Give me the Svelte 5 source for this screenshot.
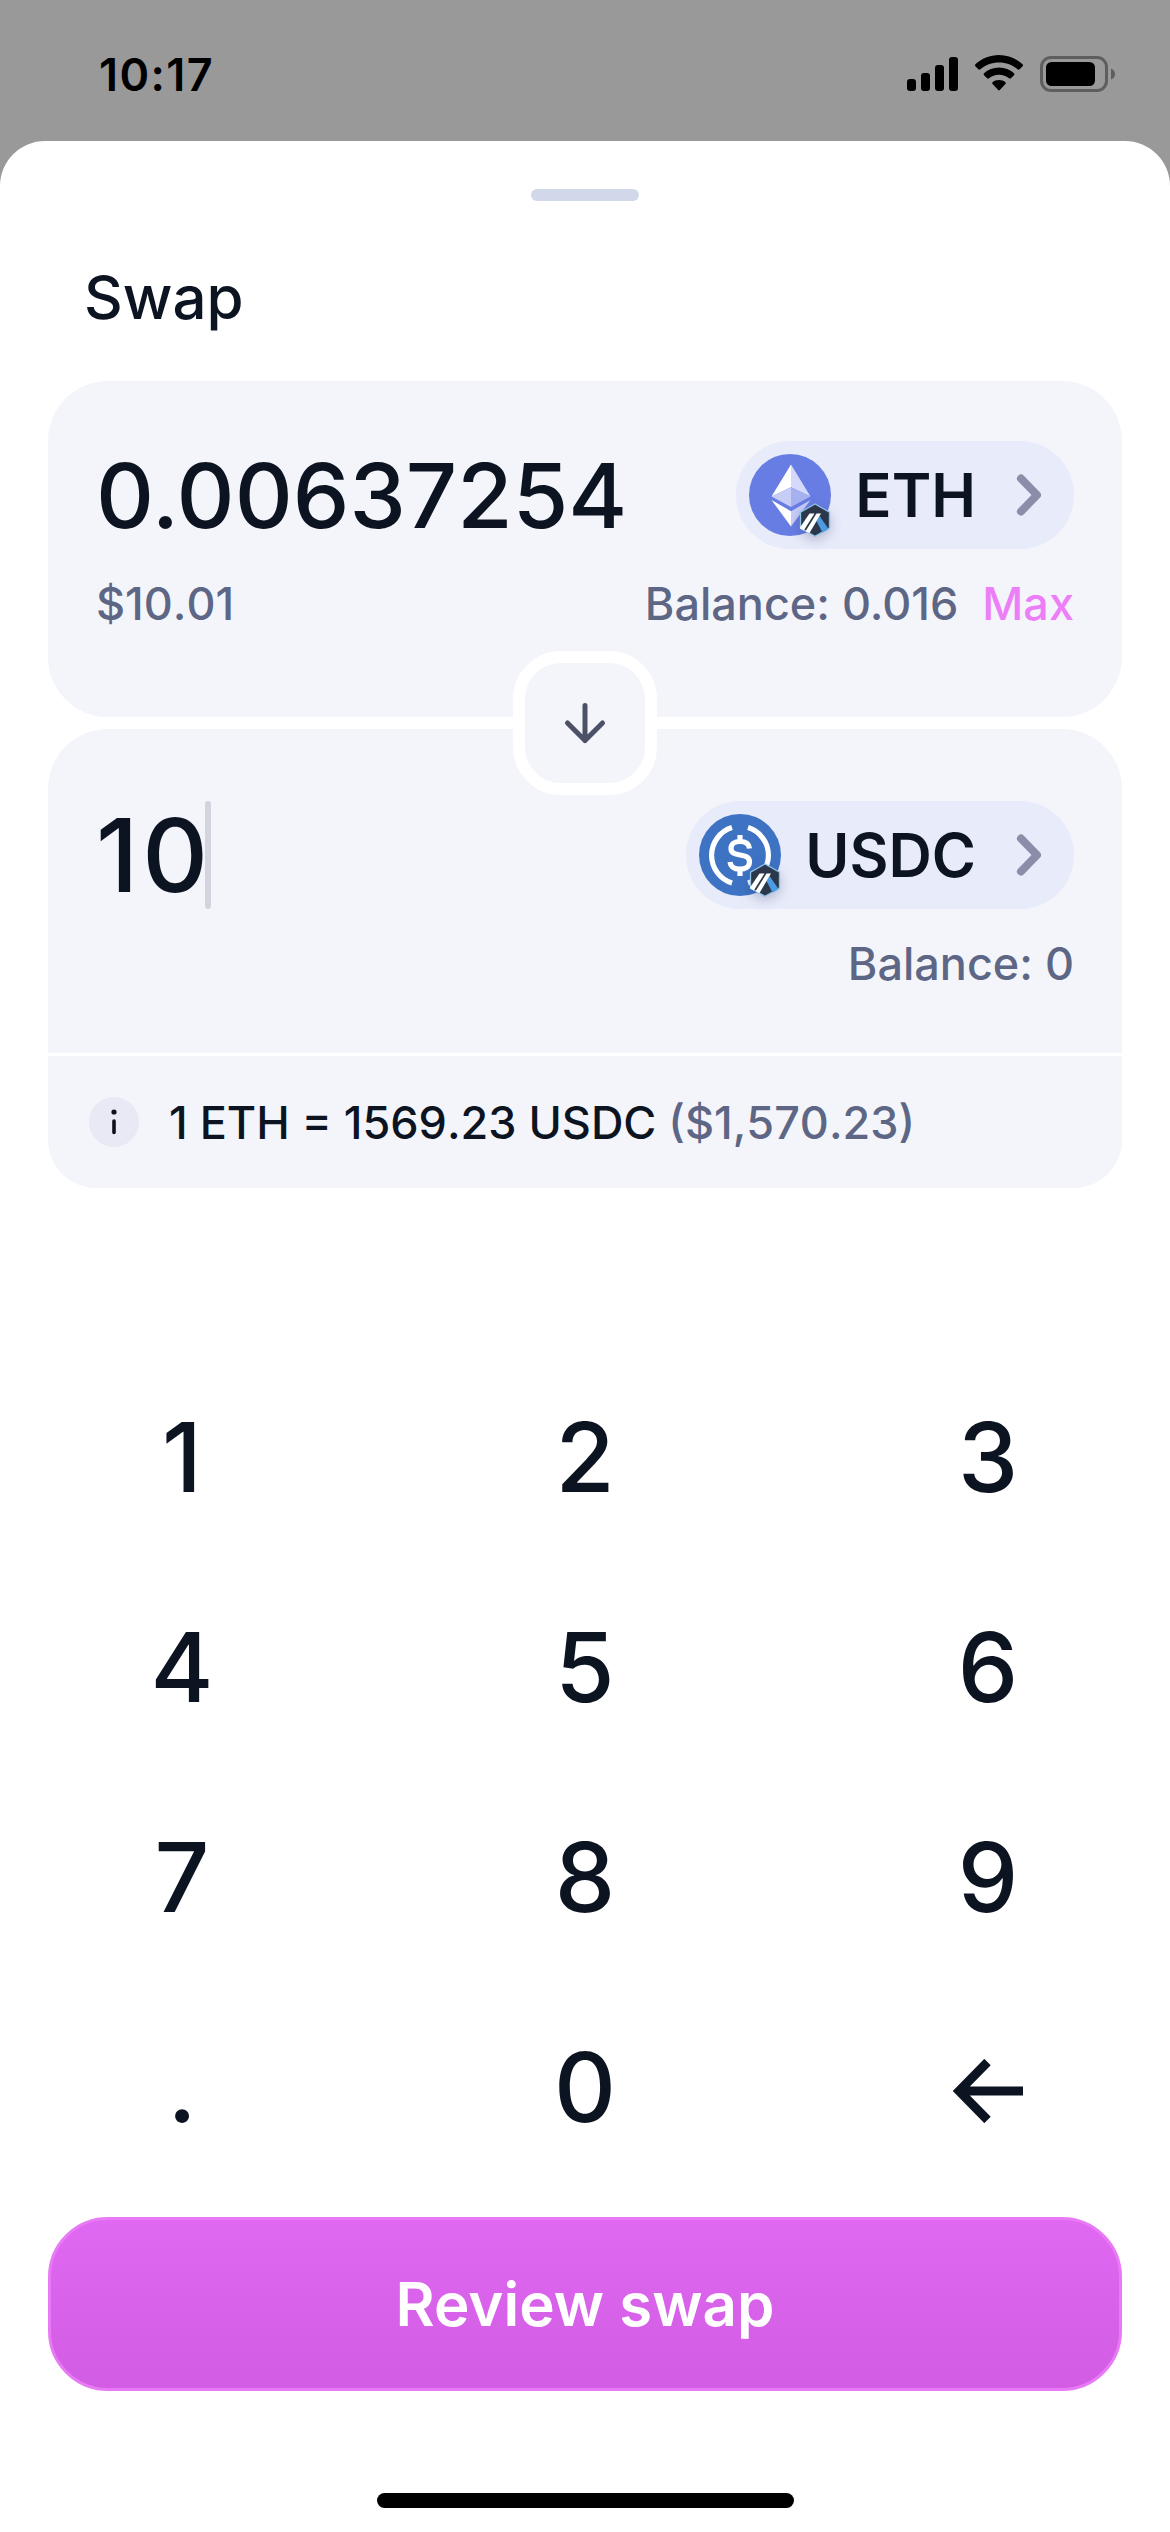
<script>
    let sellAmount = '0.00637254';
    let buyAmount = '10';

    const keys = ['1', '2', '3', '4', '5', '6', '7', '8', '9', '.', '0', 'back'];

    function press(key) {
        if (key === 'back') {
            buyAmount = buyAmount.slice(0, -1);
            return;
        }
        if (key === '.' && buyAmount.includes('.')) return;
        buyAmount += key;
    }
</script>

<div class="screen">
    <div class="status">
        <span class="time">10:17</span>
        <div class="status-icons">
            <svg class="signal" width="51" height="34" viewBox="0 0 51 34">
                <rect x="0" y="22" width="9" height="12" rx="3" />
                <rect x="14" y="16" width="9" height="18" rx="3" />
                <rect x="28" y="8" width="9" height="26" rx="3" />
                <rect x="42" y="0" width="9" height="34" rx="3" />
            </svg>
            <svg class="wifi" width="48" height="36" viewBox="0 0 48 36">
                <path d="M24 0C33 0 41.400 3.500 47.600 9.300Q48.400 10.300 47.600 11.200L44.600 14.300Q43.600 15.200 42.600 14.300C37.700 9.900 31.200 7.500 24 7.500S10.300 9.900 5.400 14.300Q4.400 15.200 3.400 14.300L.4 11.200Q-.4 10.300 .4 9.300C6.600 3.500 15 0 24 0Z" />
                <path d="M24 12.500C29.800 12.500 35 14.600 39 18.300Q39.900 19.200 39 20.200L35.900 23.200Q35 24.100 34 23.200C31.300 20.900 27.800 19.700 24 19.700S16.700 20.900 14 23.200Q13 24.100 12.100 23.200L9 20.200Q8.100 19.200 9 18.300C13 14.600 18.200 12.500 24 12.500Z" />
                <path d="M24 25C26.600 25 28.800 25.900 30.500 27.300Q31.300 28.200 30.400 29.100L24.800 35Q24 35.800 23.200 35L17.600 29.100Q16.700 28.200 17.500 27.300C19.200 25.900 21.400 25 24 25Z" />
            </svg>
            <svg class="battery" width="76" height="36" viewBox="0 0 76 36">
                <rect x="1.500" y="1.500" width="65" height="33" rx="9.500" fill="none" stroke="#5e5e5e" stroke-width="3" />
                <rect x="6" y="6" width="49" height="24" rx="5.500" />
                <path d="M71 12.500Q75 14 75 18T71 23.500Z" fill="#5e5e5e" />
            </svg>
        </div>
    </div>

    <div class="sheet">
        <div class="handle"></div>
        <h1>Swap</h1>

        <div class="card sell">
            <div class="row">
                <span class="amount">{sellAmount}</span>
                <button class="token">
                    <span class="logo">
                        <svg width="82" height="82" viewBox="0 0 82 82">
                            <circle cx="41" cy="41" r="41" fill="#687de3" />
                            <path d="M42 10.500L22.500 42.500L42 33.300Z" fill="#fff" />
                            <path d="M42 10.500L61.500 42.500L42 33.300Z" fill="#d5dafa" />
                            <path d="M22.500 42.500L42 33.300V53Z" fill="#c6cdf7" />
                            <path d="M61.500 42.500L42 33.300V53Z" fill="#a6b1ef" />
                            <path d="M22.500 46L42 57.200V72.500Z" fill="#fff" />
                            <path d="M61.500 46L42 57.200V72.500Z" fill="#c6cdf7" />
                        </svg>
                        <span class="badge">{@render arbitrum()}</span>
                    </span>
                    <span class="symbol">ETH</span>
                    {@render chevron()}
                </button>
            </div>
            <div class="row details">
                <span class="fiat">$10.01</span>
                <span>Balance: 0.016 <b>Max</b></span>
            </div>

            <button class="switch" aria-label="Switch tokens">
                <svg width="44" height="44" viewBox="0 0 44 44" fill="none" stroke="#4c5168" stroke-width="5" stroke-linecap="round" stroke-linejoin="round">
                    <path d="M22 4.500V39.500M4.500 22L22 39.500L39.500 22" />
                </svg>
            </button>
        </div>

        <div class="card buy">
            <div class="row">
                <span class="amount large">{buyAmount}<i class="caret"></i></span>
                <button class="token">
                    <span class="logo">
                        <svg width="82" height="82" viewBox="0 0 82 82">
                            <circle cx="41" cy="41" r="41" fill="#3e73c4" />
                            <g fill="none" stroke="#fff" stroke-width="5.200">
                                <path d="M33 13.600A29 29 0 0 0 33 69" />
                                <path d="M49 13.600A29 29 0 0 1 49 69" />
                                <path d="M50.500 34.500C50 29.500 46.500 27.500 41 27.500C35.500 27.500 32 30.100 32 34.500C32 44.500 50.500 37.500 50.500 48C50.500 52.500 46.500 55.200 41 55.200C34.500 55.200 31.500 52.200 31 48" />
                                <path d="M41 21V28M41 55V62" />
                            </g>
                        </svg>
                        <span class="badge">{@render arbitrum()}</span>
                    </span>
                    <span class="symbol">USDC</span>
                    {@render chevron()}
                </button>
            </div>
            <div class="row details end">
                <span>Balance: 0</span>
            </div>
        </div>

        <div class="rate">
            <svg width="50" height="50" viewBox="0 0 50 50">
                <circle cx="25" cy="25" r="25" fill="#e8e9f4" />
                <circle cx="25" cy="15" r="2.600" fill="#0d111c" />
                <path d="M25 24V35.500" stroke="#0d111c" stroke-width="3.600" stroke-linecap="round" />
            </svg>
            <span>1 ETH = 1569.23 USDC <em>($1,570.23)</em></span>
        </div>

        <div class="keypad">
            {#each keys as key}
                <button on:click={() => press(key)} aria-label={key}>
                    {#if key === 'back'}
                        <svg class="back" width="70" height="64" viewBox="0 0 70 64" fill="none" stroke="#0d1421" stroke-width="9">
                            <path d="M34.500 3L6 32L34.500 61M6 32H70" />
                        </svg>
                    {:else}
                        {key}
                    {/if}
                </button>
            {/each}
        </div>

        <button class="review">Review swap</button>
        <div class="home"></div>
    </div>
</div>

{#snippet chevron()}
    <svg class="chevron" width="26" height="42" viewBox="0 0 26 42" fill="none" stroke="#8a8ea9" stroke-width="8" stroke-linecap="round" stroke-linejoin="round">
        <path d="M5 4.500L21 21L5 37.500" />
    </svg>
{/snippet}

{#snippet arbitrum()}
    <svg width="32" height="34" viewBox="0 0 32 34">
        <path d="M16 1L30.500 9.200V25L16 33.200L1.500 25V9.200Z" fill="#2b384c" stroke="#8fc0e6" stroke-width="1.300" />
        <path d="M17.500 18L20.500 13L29.500 26L23.500 29.500Z" fill="#4b9ae2" />
        <path d="M10.500 10.500H15.500L4.800 27.500L1 25.500V24.500Z" fill="#fff" />
        <path d="M17.500 10.500H22L10.500 30L6.500 28.300Z" fill="#fff" />
    </svg>
{/snippet}

<style>
    :global(body){background:#999}
    .screen{display:flex;flex-direction:column;width:1170px;height:2532px;background:#999;font-family:Inter,"Liberation Sans",sans-serif;font-weight:500;color:#0d1421}
    button{border:0;padding:0;margin:0;background:none;color:inherit;font:inherit}
    svg{display:block;flex:none}

    .status{display:flex;justify-content:space-between;height:141px;padding:0 54px 0 99px;box-sizing:border-box;color:#000}
    .time{padding-top:47px;font-size:45px;line-height:55px;font-weight:600;letter-spacing:1.4px}
    .status-icons{display:flex;align-items:flex-start;padding-top:55px}
    .signal{margin-top:2px}
    .wifi{margin-left:17px}
    .battery{margin:1px 0 0 17px}

    .sheet{display:flex;flex-direction:column;flex:1;padding:0 48px;background:#fff;border-radius:45px 45px 0 0}
    .handle{width:108px;height:12px;margin:48px auto 0;border-radius:6px;background:#d0d8ea}
    h1{margin:60px 0 47px 36px;font-size:60px;line-height:73px;font-weight:500}

    .card{display:flex;flex-direction:column;box-sizing:border-box;padding:60px 48px 0;background:#f4f5fb}
    .sell{position:relative;height:336px;border-radius:60px}
    .buy{height:324px;margin-top:12px;padding-top:72px;border-radius:60px 60px 0 0}
    .row{display:flex;justify-content:space-between;align-items:center}
    .amount{display:flex;align-items:center;padding-top:2px;font-size:90px;line-height:106px}
    .large{padding-top:0;font-size:102px;letter-spacing:4px}
    .caret{width:6px;height:108px;margin-left:-7px;border-radius:3px;background:#d3d4df}
    .details{margin-top:27px;font-size:45px;line-height:55px;color:#5d6785}
    .details b{margin-left:12px;font-weight:500;color:#ec7ff7}
    .fiat{font-kerning:none}
    .end{justify-content:flex-end}

    .token{display:flex;align-items:center;height:108px;padding:0 32px 0 13px;border-radius:54px;background:#e8ebfa}
    .logo{position:relative}
    .badge{position:absolute;right:0;bottom:-1px;filter:drop-shadow(0 4px 6px rgba(30,40,90,.25))}
    .symbol{margin:0 40px 0 24px;font-size:60px;line-height:73px;font-weight:600}

    .switch{position:absolute;left:465px;top:270px;display:flex;align-items:center;justify-content:center;width:144px;height:144px;box-sizing:border-box;border:12px solid #fff;border-radius:48px;background:#f4f5fb;z-index:1}

    .rate{display:flex;align-items:center;height:132px;margin-top:3px;padding:0 41px;gap:30px;box-sizing:border-box;border-radius:0 0 48px 48px;background:#f4f5fb;font-size:45px;font-kerning:none}
    .rate em{font-style:normal;color:#5d6785}

    .keypad{display:grid;grid-template-columns:repeat(3,403px);grid-auto-rows:210px;justify-content:center;margin:164px -68px 0}
    .keypad button{display:flex;align-items:center;justify-content:center;font-size:96px;line-height:116px}
    .back{margin-top:8px}

    .review{height:174px;margin-top:25px;box-sizing:border-box;border:3px solid #e87bf5;border-radius:60px;background:linear-gradient(#e068f2,#d25ce4);color:#fff;font-size:60px;font-weight:600}
    .home{width:417px;height:15px;margin:102px auto 0;border-radius:8px;background:#000}
</style>
